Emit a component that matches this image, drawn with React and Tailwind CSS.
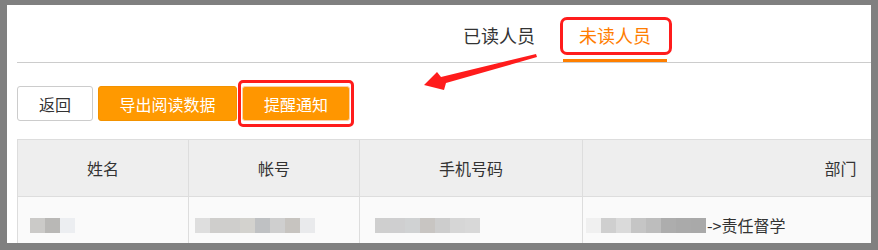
import React from 'react'

const TABS = [
  { label: '已读人员', active: false },
  { label: '未读人员', active: true },
]

const COLS = [
  { label: '姓名', w: 'w-[171px]' },
  { label: '帐号', w: 'w-[171px]' },
  { label: '手机号码', w: 'w-[223px]' },
  { label: '部门', w: 'w-[516px]' },
]

// blurred (mosaic) cell contents
const BLUR = [
  { ml: 'ml-[12px]', cells: ['#cbcac8', '#b9b8b6', '#eceef1'] },
  { ml: 'ml-[6px]', cells: ['#dedede', '#cfcecc', '#cfcecc', '#d3d2ce', '#bfc1c3', '#cfcfcf', '#c7c4c0', '#e9eaec'] },
  { ml: 'ml-[15px]', cells: ['#cfcfcf', '#cfcfd0', '#d0d2d3', '#c8c5c2', '#cdcdcd', '#d6d6d6', '#d8d8d8'] },
  { ml: 'ml-[3px]', cells: ['#f0f0f0', '#cfcfcf', '#dadada', '#c5c5c5', '#bdbdbd', '#adadad', '#aaaaaa', '#a9a9a9'] },
]

function Mosaic({ cells }) {
  return (
    <div className="flex h-[15px]">
      {cells.map((c, i) => (
        <div key={i} className="w-[15px] h-full" style={{ backgroundColor: c }} />
      ))}
    </div>
  )
}

export default function App() {
  return (
    <div className="w-[878px] h-[250px] bg-[#808080] pt-[5px] pl-[7px] pr-[7px] font-['Noto_Sans_CJK_SC','Noto_Sans',sans-serif] overflow-hidden">
      <div className="relative w-[864px] h-[238px] bg-white overflow-hidden pl-[10px]">
        {/* Tabs */}
        <div className="flex h-[58px] border-b border-[#cccccc]">
          <div className="flex gap-[12px] ml-[430px]">
            {TABS.map((t) => (
              <div key={t.label} className="relative w-[104px] pt-[18px] text-center">
                <span className={`text-[18px] leading-[24px] ${t.active ? 'text-[#ff7d00]' : 'text-[#333333]'}`}>
                  {t.label}
                </span>
                {t.active && <div className="absolute left-0 right-0 bottom-0 h-[3px] bg-[#ff7f00]" />}
              </div>
            ))}
          </div>
        </div>

        {/* Buttons */}
        <div className="flex gap-[5px] mt-[23px]">
          <button className="w-[76px] h-[35px] rounded-[3px] border border-[#cccccc] bg-white text-[16px] text-[#333333]">
            返回
          </button>
          <button className="w-[139px] h-[35px] rounded-[3px] border border-[#f39200] bg-[#ff9900] text-[16px] text-white">
            导出阅读数据
          </button>
          <button className="w-[108px] h-[35px] rounded-[3px] border border-[#fcd0a8] bg-[#ff9600] text-[16px] text-white">
            提醒通知
          </button>
        </div>

        {/* Table */}
        <table className="mt-[18px] table-fixed border-collapse w-[1081px]">
          <thead>
            <tr className="bg-[#eeeeee] h-[57px]">
              {COLS.map((c) => (
                <th key={c.label} className={`${c.w} border border-[#dddddd] font-normal text-[16px] text-[#333333] text-center`}>
                  {c.label}
                </th>
              ))}
            </tr>
          </thead>
          <tbody>
            <tr className="bg-[#fafafa] h-[57px]">
              {BLUR.map((b, i) => (
                <td key={i} className="border border-[#dddddd] align-middle">
                  <div className={`flex items-center ${b.ml}`}>
                    <Mosaic cells={b.cells} />
                    {i === 3 && (
                      <span className="text-[16px] leading-[20px] text-[#333333] ml-[1px]">-&gt;责任督学</span>
                    )}
                  </div>
                </td>
              ))}
            </tr>
          </tbody>
        </table>

        {/* Annotation: red box around the active tab */}
        <div className="absolute left-[553px] top-[12px] w-[112px] h-[38px] border-[3px] border-[#ff1c1c] rounded-[7px]" />
        {/* Annotation: red box around the notify button */}
        <div className="absolute left-[231px] top-[75px] w-[116px] h-[47px] border-[3px] border-[#ff1c1c] rounded-[5px]" />
        {/* Annotation: arrow */}
        <svg className="absolute left-0 top-0" width="864" height="238" viewBox="7 5 864 238">
          <polygon
            points="536,54 537,57 446,83 444,90 424,85 437,72 441,77"
            fill="#ff1c1c"
          />
        </svg>
      </div>
    </div>
  )
}
